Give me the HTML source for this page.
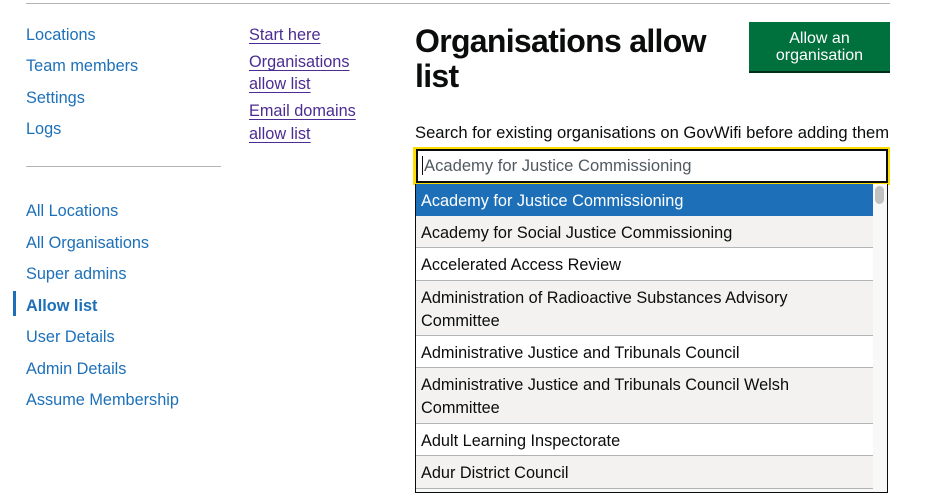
<!DOCTYPE html>
<html><head><meta charset="utf-8"><style>
*{margin:0;padding:0;box-sizing:border-box}
body{width:937px;height:503px;overflow:hidden;background:#fff;font-family:"Liberation Sans",Arial,sans-serif;color:#0b0c0c;position:relative}
.a{position:absolute;white-space:nowrap}
.n{font-size:16.3px;color:#1d70b8;line-height:20px}
.p{font-size:16.3px;color:#4c2c92;text-decoration:underline;text-underline-offset:3px;line-height:20px}
.row{position:absolute;left:416px;width:457px;font-size:16.3px;line-height:22.5px;padding:6px 5px 4px;border-bottom:1px solid #b1b4b6;background:#f3f2f1}
.w{background:#fff}
</style></head><body>
<div class="a" style="left:26px;top:3px;width:864px;height:1px;background:#b1b4b6"></div>
<div class="a n" style="left:26px;top:25px">Locations</div>
<div class="a n" style="left:26px;top:56px">Team members</div>
<div class="a n" style="left:26px;top:88px">Settings</div>
<div class="a n" style="left:26px;top:119px">Logs</div>
<div class="a" style="left:26px;top:166px;width:195px;height:1px;background:#b1b4b6"></div>
<div class="a n" style="left:26px;top:201px">All Locations</div>
<div class="a n" style="left:26px;top:233px">All Organisations</div>
<div class="a n" style="left:26px;top:264px">Super admins</div>
<div class="a" style="left:13px;top:291px;width:3px;height:25px;background:#1d70b8"></div>
<div class="a n" style="left:26px;top:296px;font-weight:bold">Allow list</div>
<div class="a n" style="left:26px;top:327px">User Details</div>
<div class="a n" style="left:26px;top:359px">Admin Details</div>
<div class="a n" style="left:26px;top:390px">Assume Membership</div>

<div class="a p" style="left:249px;top:25px">Start here</div>
<div class="a p" style="left:249px;top:51px;line-height:22px">Organisations<br>allow list</div>
<div class="a p" style="left:249px;top:100px;line-height:23px">Email domains<br>allow list</div>

<div class="a" style="left:415px;top:24px;font-size:32px;font-weight:bold;line-height:35px;letter-spacing:-0.7px">Organisations allow<br>list</div>
<div class="a" style="left:749px;top:22px;width:141px;height:51px;background:#00703c;border-bottom:2px solid #002d18;color:#fff;font-size:16px;line-height:17px;text-align:center;padding-top:8px">Allow an<br>organisation</div>

<div class="a" style="left:415px;top:123px;font-size:16.6px">Search for existing organisations on GovWifi before adding them</div>
<div class="a" style="left:413px;top:147px;width:477px;height:38px;background:#ffdd00"></div>
<div class="a" style="left:416px;top:149px;width:472px;height:34px;background:#fff;border:2px solid #0b0c0c;font-size:16.6px;color:#505a5f;padding:5px 4px;line-height:20px"><span style="border-left:1px solid #0b0c0c;margin-right:1px"></span>Academy for Justice Commissioning</div>

<div class="a" style="left:415px;top:184px;width:473px;height:309px;border:1px solid #0b0c0c;border-top:none;background:#f8f8f8;overflow:hidden">
</div>
<div class="a" style="left:875px;top:186px;width:9px;height:18px;border-radius:5px;background:#c1c1c1"></div>
<div class="row" style="top:184px;height:32px;background:#1d70b8;color:#fff;border-bottom:none">Academy for Justice Commissioning</div>
<div class="row" style="top:216px;height:32px">Academy for Social Justice Commissioning</div>
<div class="row w" style="top:248px;height:33px">Accelerated Access Review</div>
<div class="row" style="top:281px;height:55px">Administration of Radioactive Substances Advisory<br>Committee</div>
<div class="row w" style="top:336px;height:32px">Administrative Justice and Tribunals Council</div>
<div class="row" style="top:368px;height:56px">Administrative Justice and Tribunals Council Welsh<br>Committee</div>
<div class="row w" style="top:424px;height:32px">Adult Learning Inspectorate</div>
<div class="row" style="top:456px;height:33px">Adur District Council</div>
<div class="a" style="left:415px;top:492px;width:473px;height:1px;background:#0b0c0c"></div>
</body></html>
